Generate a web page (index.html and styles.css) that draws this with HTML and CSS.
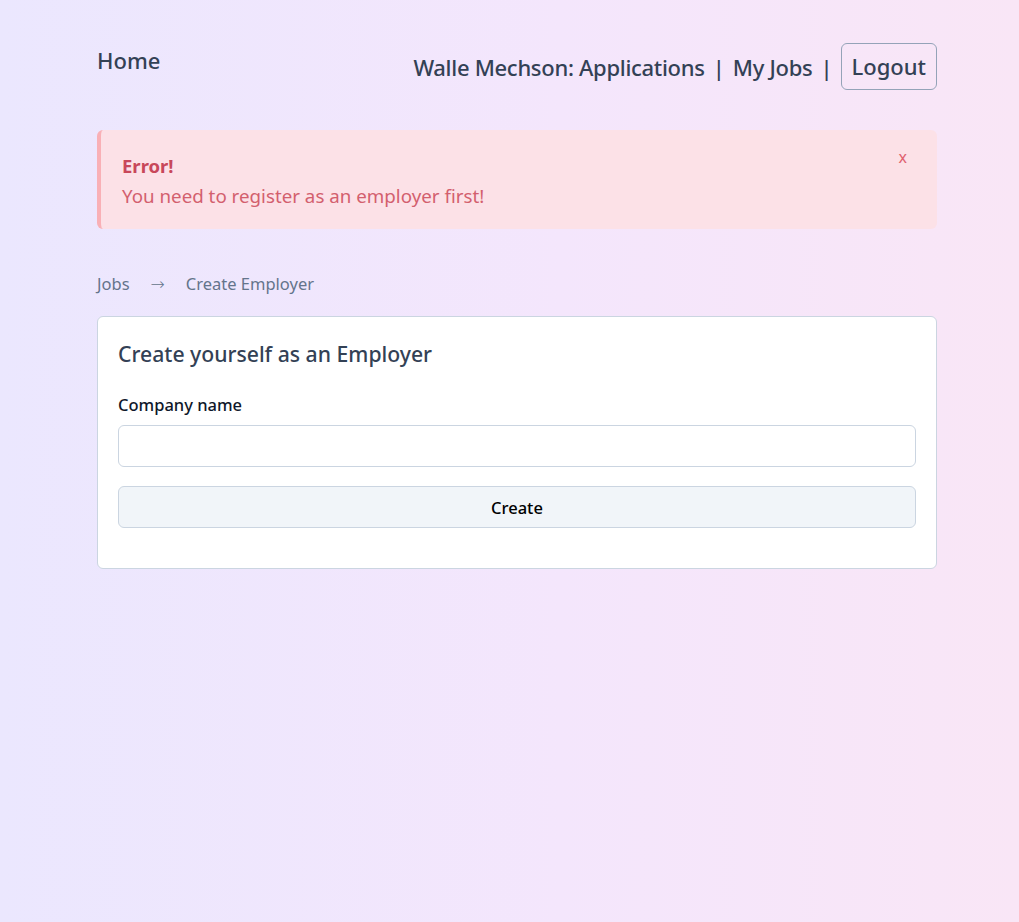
FILE: index.html
```html
<!DOCTYPE html>
<html lang="en">
<head>
<meta charset="utf-8">
<title>Create Employer</title>
<link rel="stylesheet" href="styles.css">
</head>
<body>
<div class="page">
  <nav class="nav">
    <a class="home" href="#">Home</a>
    <div class="nav-right">
      <span class="nav-link">Walle Mechson: Applications</span>
      <span class="sep">|</span>
      <span class="nav-link">My Jobs</span>
      <span class="sep">|</span>
      <button class="logout">Logout</button>
    </div>
  </nav>

  <div class="alert">
    <div class="alert-body">
      <div class="alert-title">Error!</div>
      <div class="alert-msg">You need to register as an employer first!</div>
    </div>
    <div class="alert-close">x</div>
  </div>

  <div class="crumbs">
    <span>Jobs</span>
    <span class="arrow">→</span>
    <span>Create Employer</span>
  </div>

  <div class="card">
    <h2 class="card-title">Create yourself as an Employer</h2>
    <label class="label">Company name</label>
    <input class="input" type="text">
    <button class="create">Create</button>
  </div>
</div>
</body>
</html>
```

FILE: styles.css
```css
* { box-sizing: border-box; }
html, body { margin: 0; padding: 0; }
body {
  min-height: 922px;
  background: linear-gradient(to right, #ebe7fe 0%, #f4e6fc 55%, #f9e6f6 100%);
  font-family: "Noto Sans", "Open Sans", sans-serif;
  color: #334155;
}
.page {
  width: 840px;
  margin-left: 97px;
  padding-top: 43px;
}
.nav {
  display: flex;
  justify-content: space-between;
  align-items: flex-start;
}
.home {
  font-size: 22px;
  line-height: 32px;
  padding-top: 1px;
  color: #334155;
  text-decoration: none;
  font-weight: 500;
}
.nav-right {
  display: flex;
  align-items: center;
  gap: 8px;
  font-size: 22px;
  font-weight: 500;
}
.nav-link { letter-spacing: -0.3px; }
.sep { color: #334155; }
.logout {
  font-family: inherit;
  font-size: 22px;
  font-weight: 500;
  color: #334155;
  background: transparent;
  border: 1px solid #94a3b8;
  border-radius: 6px;
  padding: 5px 10px 7px;
  line-height: 32px;
  height: 47px;
}
.alert {
  margin-top: 40px;
  display: flex;
  justify-content: space-between;
  align-items: flex-start;
  background: #fce1e7;
  border-left: 4px solid #f9b0b6;
  border-radius: 6px;
  padding: 22px 20px 18px 21px;
}
.alert-title {
  font-size: 18.5px;
  line-height: 28px;
  font-weight: 700;
  color: #c8475a;
}
.alert-msg {
  font-size: 18.75px;
  line-height: 31px;
  color: #d35f6e;
}
.alert-close {
  color: #e0606e;
  font-size: 16px;
  line-height: 20px;
  margin-top: -5px;
  margin-right: 10px;
}
.crumbs {
  margin-top: 43px;
  display: flex;
  align-items: center;
  gap: 21px;
  font-size: 16.5px;
  line-height: 24px;
  color: #64748b;
}
.arrow {
  font-family: "DejaVu Sans", sans-serif;
  font-size: 17px;
  font-weight: 300;
}
.card {
  margin-top: 20px;
  background: #fff;
  border: 1px solid #cbd5e1;
  border-radius: 6px;
  padding: 23px 20px 40px 20px;
  display: flex;
  flex-direction: column;
}
.card-title {
  margin: 0;
  font-size: 21.2px;
  line-height: 28px;
  font-weight: 500;
  color: #334155;
}
.label {
  margin-top: 25px;
  font-size: 16.5px;
  line-height: 24px;
  font-weight: 500;
  color: #0f172a;
}
.input {
  margin-top: 8px;
  height: 42px;
  border: 1px solid #cbd5e1;
  border-radius: 6px;
  background: #fff;
  font-family: inherit;
  font-size: 16px;
}
.create {
  margin-top: 19px;
  height: 42px;
  border: 1px solid #cbd5e1;
  border-radius: 6px;
  background: #f1f5f9;
  font-family: inherit;
  font-size: 16.5px;
  font-weight: 500;
  color: #000;
}
```
